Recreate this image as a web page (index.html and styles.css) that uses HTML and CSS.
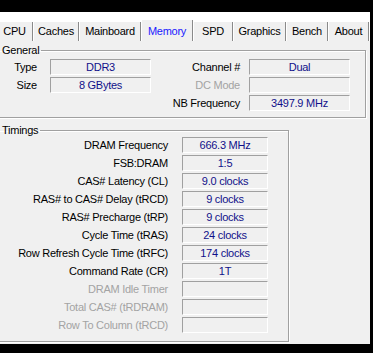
FILE: index.html
```html
<!DOCTYPE html>
<html>
<head>
<meta charset="utf-8">
<link rel="stylesheet" href="styles.css">
</head>
<body>
<div class="window">
  <div class="tabs">
    <div class="tab">CPU</div>
    <div class="tab">Caches</div>
    <div class="tab">Mainboard</div>
    <div class="tab tab-active">Memory</div>
    <div class="tab">SPD</div>
    <div class="tab">Graphics</div>
    <div class="tab">Bench</div>
    <div class="tab">About</div>
  </div>
  <div class="panel">
    <fieldset class="group general">
      <legend>General</legend>
      <div class="grid-general">
        <span class="lbl">Type</span><span class="val">DDR3</span>
        <span class="lbl lbl-r">Channel #</span><span class="val">Dual</span>
        <span class="lbl">Size</span><span class="val">8 GBytes</span>
        <span class="lbl lbl-r dis">DC Mode</span><span class="val"></span>
        <span class="lbl"></span><span></span>
        <span class="lbl lbl-r">NB Frequency</span><span class="val">3497.9 MHz</span>
      </div>
    </fieldset>
    <fieldset class="group timings">
      <legend>Timings</legend>
      <div class="grid-timings">
        <span class="lbl">DRAM Frequency</span><span class="val">666.3 MHz</span>
        <span class="lbl">FSB:DRAM</span><span class="val">1:5</span>
        <span class="lbl">CAS# Latency (CL)</span><span class="val">9.0 clocks</span>
        <span class="lbl">RAS# to CAS# Delay (tRCD)</span><span class="val">9 clocks</span>
        <span class="lbl">RAS# Precharge (tRP)</span><span class="val">9 clocks</span>
        <span class="lbl">Cycle Time (tRAS)</span><span class="val">24 clocks</span>
        <span class="lbl">Row Refresh Cycle Time (tRFC)</span><span class="val">174 clocks</span>
        <span class="lbl">Command Rate (CR)</span><span class="val">1T</span>
        <span class="lbl dis">DRAM Idle Timer</span><span class="val"></span>
        <span class="lbl dis">Total CAS# (tRDRAM)</span><span class="val"></span>
        <span class="lbl dis">Row To Column (tRCD)</span><span class="val"></span>
      </div>
    </fieldset>
  </div>
</div>
</body>
</html>
```

FILE: styles.css
```css
html, body {
  margin: 0;
  padding: 0;
}
body {
  background: #000;
  font-family: "Liberation Sans", Arial, sans-serif;
  font-size: 11px;
  letter-spacing: -0.25px;
  color: #000;
  height: 353px;
  overflow: hidden;
}
.window {
  margin-top: 12px;
  width: 370px;
  height: 332px;
  background: #f0f0f0;
  overflow: hidden;
}
.tabs {
  display: flex;
  align-items: flex-end;
  height: 29px;
  background: #fff;
  margin-left: -4px;
}
.tab {
  box-sizing: border-box;
  height: 19px;
  line-height: 18px;
  text-align: center;
  background: #f0f0f0;
  border-left: 1px solid #fff;
  border-right: 1px solid #8a8a8a;
  white-space: nowrap;
}
.tab:nth-child(1) { width: 37px; }
.tab:nth-child(2) { width: 46px; }
.tab:nth-child(3) { width: 62px; }
.tab:nth-child(4) { width: 52px; }
.tab:nth-child(5) { width: 40px; }
.tab:nth-child(6) { width: 53px; }
.tab:nth-child(7) { width: 42px; }
.tab:nth-child(8) { width: 41px; }
.tab-active {
  height: 21px;
  padding-top: 2px;
  color: #1a1aff;
}
.panel {
  margin-left: -4px;
  padding-top: 3px;
}
.group {
  box-sizing: border-box;
  margin: 0;
  min-width: 0;
  border: 1px solid #a0a0a0;
  box-shadow: inset 1px 1px 0 #fff, 1px 1px 0 #fff;
}
.group legend {
  padding: 0 2px;
  margin-left: 3px;
  line-height: 13px;
}
.general {
  width: 370px;
  padding: 2px 0 6px 0;
}
.timings {
  width: 293px;
  margin-top: 6px;
  padding: 0 0 8px 0;
}
.grid-general {
  display: grid;
  grid-template-columns: 53px 101px 98px 101px;
  grid-auto-rows: 16px;
  row-gap: 2px;
}
.grid-timings {
  display: grid;
  grid-template-columns: 185px 86px;
  grid-auto-rows: 16px;
  row-gap: 2px;
}
.lbl {
  line-height: 16px;
  text-align: right;
  white-space: nowrap;
  padding-right: 13px;
}
.lbl-r {
  padding-right: 9px;
}
.grid-timings .lbl {
  padding-right: 14px;
}
.dis {
  color: #a3a3a3;
}
.val {
  box-sizing: border-box;
  border-top: 1px solid #a0a0a0;
  border-left: 1px solid #a0a0a0;
  border-bottom: 1px solid #fff;
  border-right: 1px solid #fff;
  line-height: 14px;
  text-align: center;
  color: #10108a;
  white-space: nowrap;
}
```
